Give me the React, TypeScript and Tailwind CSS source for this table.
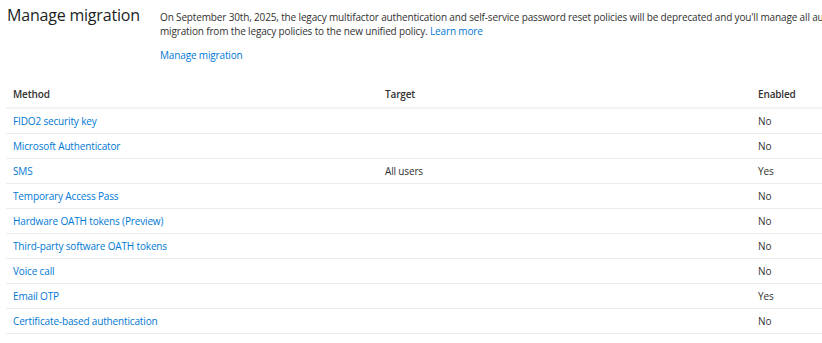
const rows = [
  { method: 'FIDO2 security key', target: '', enabled: 'No' },
  { method: 'Microsoft Authenticator', target: '', enabled: 'No' },
  { method: 'SMS', target: 'All users', enabled: 'Yes' },
  { method: 'Temporary Access Pass', target: '', enabled: 'No' },
  { method: 'Hardware OATH tokens (Preview)', target: '', enabled: 'No' },
  { method: 'Third-party software OATH tokens', target: '', enabled: 'No' },
  { method: 'Voice call', target: '', enabled: 'No' },
  { method: 'Email OTP', target: '', enabled: 'Yes' },
  { method: 'Certificate-based authentication', target: '', enabled: 'No' },
];

export default function App() {
  return (
    <div className="w-[822px] h-[343px] overflow-hidden bg-white text-[#323130] font-['Open_Sans',sans-serif]">
      <div className="flex pt-[4px]">
        <h1 className="w-[160px] shrink-0 pl-[7px] text-[16px] tracking-[-0.2px] leading-[22px] font-normal text-[#201f1e]">Manage migration</h1>
        <div className="min-w-0 pt-[6px] text-[10px] tracking-[-0.15px] leading-[14px] whitespace-nowrap overflow-hidden">
          <p>
            On September 30th, 2025, the legacy multifactor authentication and self-service password reset policies will be deprecated and you'll manage all authentication methods here.
            <br />
            migration from the legacy policies to the new unified policy. <a className="text-[#0078d4]">Learn more</a>
          </p>
          <a className="block mt-[10px] text-[#0078d4]">Manage migration</a>
        </div>
      </div>

      <div className="ml-[6px] mt-[20px] text-[10px] tracking-[-0.15px]">
        <div className="grid grid-cols-[372px_373px_1fr] h-[27px] items-center font-semibold border-b-2 border-[#f3f2f1]">
          <div className="px-[7px]">Method</div>
          <div className="px-[7px]">Target</div>
          <div className="px-[7px]">Enabled</div>
        </div>
        {rows.map((r) => (
          <div key={r.method} className="grid grid-cols-[372px_373px_1fr] h-[25px] items-center border-b border-[#edebe9]">
            <div className="px-[7px] text-[#0078d4]">{r.method}</div>
            <div className="px-[7px]">{r.target}</div>
            <div className="px-[7px]">{r.enabled}</div>
          </div>
        ))}
      </div>
    </div>
  );
}
